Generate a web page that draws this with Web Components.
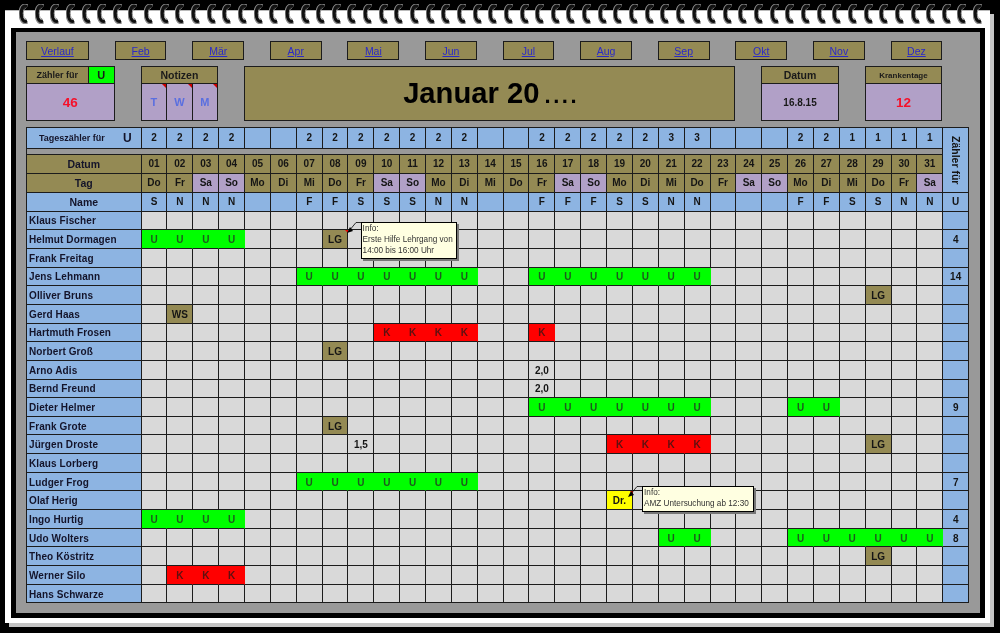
<!DOCTYPE html>
<html lang="de">
<head>
<meta charset="utf-8">
<title>Dienstplan Januar</title>
<style>
    html, body { margin: 0; padding: 0; background: #000; }
    body {
        width: 1000px;
        height: 633px;
        overflow: hidden;
        font-family: "Liberation Sans", Arial, sans-serif;
        --day: 25.87px;
        --olive: #948a54;
        --purple: #b1a0c7;
        --blue: #8db4e2;
        --line: #1c1c1c;
    }
</style>
</head>
<body>
<spiral-sheet>
    <header-board>
        <month-link style="grid-column: 1 / 2">Verlauf</month-link>
        <month-link style="grid-column: 3 / 5">Feb</month-link>
        <month-link style="grid-column: 6 / 8">Mär</month-link>
        <month-link style="grid-column: 9 / 11">Apr</month-link>
        <month-link style="grid-column: 12 / 14">Mai</month-link>
        <month-link style="grid-column: 15 / 17">Jun</month-link>
        <month-link style="grid-column: 18 / 20">Jul</month-link>
        <month-link style="grid-column: 21 / 23">Aug</month-link>
        <month-link style="grid-column: 24 / 26">Sep</month-link>
        <month-link style="grid-column: 27 / 29">Okt</month-link>
        <month-link style="grid-column: 30 / 32">Nov</month-link>
        <month-link style="grid-column: 33 / 35">Dez</month-link>

        <info-card style="grid-column: 1 / 3" kind="counter" flag="U" size="9">Zähler für<span slot="value">46</span></info-card>
        <info-card style="grid-column: 4 / 7" kind="notes" size="10.5">Notizen<note-flag slot="value">T</note-flag><note-flag slot="value">W</note-flag><note-flag slot="value">M</note-flag></info-card>
        <month-title style="grid-column: 8 / 27">Januar 20<span style="font-size:22px;letter-spacing:2.6px;margin-left:5px">....</span></month-title>
        <info-card style="grid-column: 28 / 31" size="10.5">Datum<span slot="value">16.8.15</span></info-card>
        <info-card style="grid-column: 32 / 35" kind="counter" size="8">Krankentage<span slot="value">12</span></info-card>
    </header-board>
    <roster-grid></roster-grid>
</spiral-sheet>

<script>
    class SpiralSheet extends HTMLElement {
        constructor() {
            super();
            this.attachShadow({ mode: 'open' });
            // one ring, repeated along the top edge
            const ring = `
                <svg width="9" height="20" viewBox="0 0 9 20">
                    <path d="M8.500 2.400C5 .2 1.500 2.600 1.500 9 1.500 14.500 3.500 19.800 8 17.800" fill="none" stroke="#8a8a8a" stroke-width="4"/>
                    <path d="M8 2.800C5 .8 2.400 3 2.300 9 2.200 14 4 18.800 8 16.800" fill="none" stroke="#111" stroke-width="3.200"/>
                    <path d="M7 4.500C5.500 4 4.400 6 4.300 9.500 4.300 12.500 5 15 7.200 15" fill="none" stroke="#888" stroke-width="1"/>
                </svg>`;
            this.shadowRoot.innerHTML = `
                <style>
                    :host {
                        display: block;
                        position: relative;
                        box-sizing: border-box;
                        width: 985px;
                        height: 613px;
                        margin: 10px 0 0 5px;
                        padding: 17px 5px 5px 6px;
                        background: #fff;
                        border-top: 1px solid #bbb;
                        box-shadow: 4px 4px 0 #c4c4c4;
                        filter: blur(0.2px);
                    }
                    .frame {
                        box-sizing: border-box;
                        height: 100%;
                        padding: 9px 11px 10px 10px;
                        background: #999;
                        border: solid #000;
                        border-width: 4px 5px 5px 5px;
                    }
                    .rings {
                        position: absolute;
                        top: -7px;
                        left: 14px;
                        right: 7px;
                        display: flex;
                        justify-content: space-between;
                    }
                    svg { display: block; }
                </style>
                <div class="rings">${ring.repeat(62)}</div>
                <div class="frame"><slot></slot></div>
            `;
        }
    }

    class HeaderBoard extends HTMLElement {
        constructor() {
            super();
            this.attachShadow({ mode: 'open' });
            this.shadowRoot.innerHTML = `
                <style>
                    :host {
                        display: grid;
                        grid-template-columns: 62.9px repeat(33, var(--day));
                        grid-template-rows: 19px 55px;
                        row-gap: 6px;
                        margin-bottom: 6px;
                    }
                </style>
                <slot></slot>
            `;
        }
    }

    class MonthLink extends HTMLElement {
        constructor() {
            super();
            this.attachShadow({ mode: 'open' });
            this.shadowRoot.innerHTML = `
                <style>
                    :host {
                        display: flex;
                        align-items: center;
                        justify-content: center;
                        box-sizing: border-box;
                        border: 1px solid var(--line);
                        background: var(--olive);
                        color: #2a2ac8;
                        font-size: 10.5px;
                        text-decoration: underline;
                    }
                </style>
                <slot></slot>
            `;
        }
    }

    class MonthTitle extends HTMLElement {
        constructor() {
            super();
            this.attachShadow({ mode: 'open' });
            this.shadowRoot.innerHTML = `
                <style>
                    :host {
                        display: flex;
                        align-items: baseline;
                        justify-content: center;
                        box-sizing: border-box;
                        padding: 10px 0 0 3px;
                        border: 1px solid var(--line);
                        background: var(--olive);
                        color: #000;
                        font-size: 29.2px;
                        font-weight: bold;
                    }
                </style>
                <slot></slot>
            `;
        }
    }

    class InfoCard extends HTMLElement {
        connectedCallback() {
            if (this.shadowRoot) return;
            this.attachShadow({ mode: 'open' });
            const kind = this.getAttribute('kind') || '';
            const flag = this.getAttribute('flag');
            const size = this.getAttribute('size') || 10;
            this.shadowRoot.innerHTML = `
                <style>
                    :host {
                        display: grid;
                        grid-template-rows: 17px 1fr;
                        box-sizing: border-box;
                        border: 1px solid var(--line);
                        font-weight: bold;
                        color: #1a1a1a;
                    }
                    .label {
                        display: flex;
                        background: var(--olive);
                        border-bottom: 1px solid var(--line);
                        font-size: ${size}px;
                    }
                    .label span {
                        flex: 1;
                        display: flex;
                        align-items: center;
                        justify-content: center;
                    }
                    .flag {
                        flex: 0 0 25px !important;
                        background: #00ff00;
                        border-left: 1px solid var(--line);
                        font-size: 11px;
                    }
                    .value {
                        display: flex;
                        align-items: center;
                        justify-content: center;
                        background: var(--purple);
                        font-size: 10px;
                    }
                    .value.counter { color: #f5102a; font-size: 13.5px; }
                    .value.notes { align-items: stretch; justify-content: stretch; }
                </style>
                <div class="label">
                    <span><slot></slot></span>
                    ${flag ? `<span class="flag">${flag}</span>` : ''}
                </div>
                <div class="value ${kind}"><slot name="value"></slot></div>
            `;
        }
    }

    class NoteFlag extends HTMLElement {
        constructor() {
            super();
            this.attachShadow({ mode: 'open' });
            this.shadowRoot.innerHTML = `
                <style>
                    :host {
                        position: relative;
                        flex: 1;
                        display: flex;
                        align-items: center;
                        justify-content: center;
                        color: #5a6fe0;
                        font-size: 11px;
                        border-right: 1px solid var(--line);
                    }
                    :host(:last-child) { border-right: 0; }
                    :host::after {
                        content: "";
                        position: absolute;
                        top: 0;
                        right: 0;
                        border-top: 4px solid #c00;
                        border-left: 4px solid transparent;
                    }
                </style>
                <slot></slot>
            `;
        }
    }

    class CellNote extends HTMLElement {
        constructor() {
            super();
            this.attachShadow({ mode: 'open' });
            this.shadowRoot.innerHTML = `
                <style>
                    :host {
                        position: absolute;
                        z-index: 5;
                        display: block;
                        box-sizing: border-box;
                        padding: 0 2px 2px 1px;
                        background: #ffffe1;
                        border: 1px solid #000;
                        box-shadow: 2px 2px 0 #777;
                        color: #333;
                        font: normal 8.2px/11px "Liberation Sans", Arial, sans-serif;
                        text-align: left;
                        white-space: nowrap;
                    }
                    svg {
                        position: absolute;
                        left: -15px;
                        top: -1px;
                    }
                </style>
                <svg width="15" height="12" viewBox="0 0 15 12">
                    <path d="M14 .5H9L2 9" fill="none" stroke="#000" stroke-width=".8"/>
                    <path d="M0 11 3 5 6 9z" fill="#000"/>
                </svg>
                <slot></slot>
            `;
        }
    }

    const WEEKDAYS = ['Do', 'Fr', 'Sa', 'So', 'Mo', 'Di', 'Mi'];
    const COUNTS = '2222  2222222  2222233   221111';
    const SHIFTS = 'SNNN  FFSSSNN  FFFSSNN   FFSSNN';

    // name, total, entries as [code, first day, last day]
    const STAFF = [
        ['Klaus Fischer', '', []],
        ['Helmut Dormagen', '4', [['U', 1, 4], ['LG', 8, 8]]],
        ['Frank Freitag', '', []],
        ['Jens Lehmann', '14', [['U', 7, 13], ['U', 16, 22]]],
        ['Olliver Bruns', '', [['LG', 29, 29]]],
        ['Gerd Haas', '', [['WS', 2, 2]]],
        ['Hartmuth Frosen', '', [['K', 10, 13], ['K', 16, 16]]],
        ['Norbert Groß', '', [['LG', 8, 8]]],
        ['Arno Adis', '', [['2,0', 16, 16]]],
        ['Bernd Freund', '', [['2,0', 16, 16]]],
        ['Dieter Helmer', '9', [['U', 16, 22], ['U', 26, 27]]],
        ['Frank Grote', '', [['LG', 8, 8]]],
        ['Jürgen Droste', '', [['1,5', 9, 9], ['K', 19, 22], ['LG', 29, 29]]],
        ['Klaus Lorberg', '', []],
        ['Ludger Frog', '7', [['U', 7, 13]]],
        ['Olaf Herig', '', [['Dr.', 19, 19]]],
        ['Ingo Hurtig', '4', [['U', 1, 4]]],
        ['Udo Wolters', '8', [['U', 21, 22], ['U', 26, 31]]],
        ['Theo Köstritz', '', [['LG', 29, 29]]],
        ['Werner Silo', '', [['K', 2, 4]]],
        ['Hans Schwarze', '', []]
    ];

    const CODE_CLASS = { U: 'green', K: 'red', LG: 'olive', WS: 'olive', 'Dr.': 'yellow' };

    // tooltips hang off a single cell: row name + day
    const NOTES = {
        'Helmut Dormagen/8': '<cell-note style="left:38px;top:-8px;width:96px;height:37px">Info:<br>Erste Hilfe Lehrgang von<br>14:00 bis 16:00 Uhr</cell-note>',
        'Olaf Herig/19': '<cell-note style="left:35px;top:-5px;width:112px;height:26px">Info:<br>AMZ Untersuchung ab 12:30</cell-note>'
    };

    class RosterGrid extends HTMLElement {
        constructor() {
            super();
            this.attachShadow({ mode: 'open' });
        }

        connectedCallback() {
            let html = '';

            html += `<div class="total blue vertical"><span>Zähler für</span></div>`;

            html += `<div class="head blue counter"><span>Tageszähler für</span><b>U</b></div>`;
            for (let d = 0; d < 31; d++) {
                html += `<div class="blue">${COUNTS[d].trim()}</div>`;
            }
            html += `<div class="gap"></div>`;

            html += `<div class="head olive big">Datum</div>`;
            for (let d = 1; d <= 31; d++) {
                html += `<div class="olive">${String(d).padStart(2, '0')}</div>`;
            }

            html += `<div class="head olive big">Tag</div>`;
            for (let d = 0; d < 31; d++) {
                const tag = WEEKDAYS[d % 7];
                const weekend = tag === 'Sa' || tag === 'So';
                html += `<div class="${weekend ? 'purple' : 'olive'}">${tag}</div>`;
            }

            html += `<div class="head blue big">Name</div>`;
            for (let d = 0; d < 31; d++) {
                html += `<div class="blue">${SHIFTS[d].trim()}</div>`;
            }
            html += `<div class="blue">U</div>`;

            for (const [name, total, entries] of STAFF) {
                html += `<div class="head blue person">${name}</div>`;
                for (let d = 1; d <= 31; d++) {
                    const entry = entries.find(e => d >= e[1] && d <= e[2]);
                    const code = entry ? entry[0] : '';
                    const note = NOTES[`${name}/${d}`];
                    const cls = [CODE_CLASS[code] || 'plain', note ? 'noted' : ''].join(' ');
                    html += `<div class="row ${cls}">${code}${note || ''}</div>`;
                }
                html += `<div class="row blue">${total}</div>`;
            }

            this.shadowRoot.innerHTML = `
                <style>
                    :host {
                        display: grid;
                        grid-template-columns: 114.6px repeat(32, var(--day));
                        grid-template-rows: 20.6px 6px 19px 19px 19px repeat(21, 18.67px);
                        width: fit-content;
                        border-top: 1px solid var(--line);
                        border-left: 1px solid var(--line);
                        font-size: 10px;
                        font-weight: bold;
                        color: #151515;
                    }
                    div {
                        box-sizing: border-box;
                        display: flex;
                        align-items: center;
                        justify-content: center;
                        border-right: 1px solid var(--line);
                        border-bottom: 1px solid var(--line);
                        position: relative;
                        min-width: 0;
                    }
                    .plain { background: #d9d9d9; }
                    .blue { background: var(--blue); }
                    .olive { background: var(--olive); }
                    .purple { background: var(--purple); }
                    .green { background: #00ff00; border-right-color: #00ff00; color: #1d5a1d; }
                    .red { background: #ff0000; border-right-color: #ff0000; color: #5c1010; }
                    .yellow { background: #ffff00; }
                    .gap { grid-column: 1 / span 32; background: #999; }
                    .total { grid-column: 33; grid-row: 1 / span 4; }
                    .vertical span {
                        writing-mode: vertical-rl;
                        font-size: 10.5px;
                        margin-top: 1px;
                    }
                    .head { font-size: 10.5px; color: #14142a; }
                    .row { padding-top: 1px; }
                    .person {
                        justify-content: flex-start;
                        padding: 1px 0 0 2px;
                        font-size: 10px;
                        letter-spacing: .1px;
                    }
                    .counter {
                        justify-content: space-between;
                        padding: 0 9px 0 12px;
                        font-size: 9px;
                    }
                    .counter b { font-size: 12px; }
                    .noted { z-index: 4; }
                    .noted::after {
                        content: "";
                        position: absolute;
                        top: 0;
                        right: -1px;
                        border-top: 3px solid #e00;
                        border-left: 3px solid transparent;
                    }
                </style>
                ${html}
            `;
        }
    }

    customElements.define('spiral-sheet', SpiralSheet);
    customElements.define('header-board', HeaderBoard);
    customElements.define('month-link', MonthLink);
    customElements.define('month-title', MonthTitle);
    customElements.define('info-card', InfoCard);
    customElements.define('note-flag', NoteFlag);
    customElements.define('cell-note', CellNote);
    customElements.define('roster-grid', RosterGrid);
</script>
</body>
</html>
